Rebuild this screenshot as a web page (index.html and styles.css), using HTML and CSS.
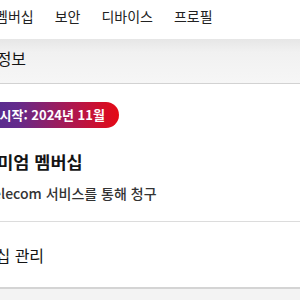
FILE: index.html
```html
<!DOCTYPE html>
<html lang="ko">
<head>
<meta charset="utf-8">
<link rel="stylesheet" href="styles.css">
</head>
<body>
<div class="page">
  <nav class="tabs">
    <span class="tab">멤버십</span>
    <span class="tab">보안</span>
    <span class="tab">디바이스</span>
    <span class="tab">프로필</span>
  </nav>
  <div class="section-head">
    <h2 class="section-title">멤버십 정보</h2>
  </div>
  <div class="card">
    <div class="plan">
      <span class="badge">멤버십 시작: 2024년 11월</span>
      <h3 class="plan-name">프리미엄 멤버십</h3>
      <p class="plan-billing">SK telecom 서비스를 통해 청구</p>
    </div>
    <div class="row"><span class="row-label">멤버십 관리</span></div>
  </div>
  <div class="rest"></div>
</div>
</body>
</html>
```
FILE: styles.css
```css
html, body {
  margin: 0;
  padding: 0;
  background: #f3f3f3;
  overflow: hidden;
}
body {
  font-family: "Noto Sans CJK KR", "Noto Sans", sans-serif;
  color: #141414;
  width: 300px;
  height: 300px;
}
.page {
  display: flex;
  flex-direction: column;
}
.tabs {
  height: 39px;
  background: #fff;
  display: flex;
  align-items: center;
  gap: 21px;
  margin-left: -5px;
  font-size: 14px;
  color: #222;
  line-height: 20px;
  padding-bottom: 7px;
  box-sizing: border-box;
}
.section-head {
  height: 45px;
  background: linear-gradient(180deg, #e6e6e6 0%, #f1f1f1 30%, #f6f6f6 100%);
  border-bottom: 1px solid #d2d2d2;
  display: flex;
  align-items: center;
  box-sizing: border-box;
  padding-bottom: 7px;
}
.section-title {
  margin: 0 0 0 -52px;
  font-size: 16px;
  line-height: 20px;
  font-weight: 400;
  color: #141414;
}
.card {
  background: #fff;
  margin-left: -35px;
}
.plan {
  padding: 18px 0 17px 0;
  border-bottom: 1px solid #dcdcdc;
  display: flex;
  flex-direction: column;
  align-items: flex-start;
}
.badge {
  display: inline-block;
  height: 26px;
  line-height: 26px;
  margin-left: -17px;
  padding: 0 14px 0 12px;
  border-radius: 0 13px 13px 0;
  background: linear-gradient(90deg, #3d2f94 0%, #632b8c 40%, #b3164a 75%, #e50914 100%);
  color: #fff;
  font-size: 13px;
  font-weight: 700;
}
.plan-name {
  margin: 20px 0 0 0;
  font-size: 17.5px;
  line-height: 28px;
  font-weight: 700;
}
.plan-billing {
  margin: 6px 0 0 1px;
  font-size: 14px;
  line-height: 22px;
  font-weight: 500;
  color: #333;
}
.row {
  height: 67px;
  display: flex;
  align-items: center;
  border-bottom: 2px solid #d4d4d4;
  box-sizing: border-box;
}
.row-label {
  margin-left: 1px;
  font-size: 16px;
  font-weight: 400;
}
.rest {
  height: 20px;
  background: #f3f3f3;
}
```
